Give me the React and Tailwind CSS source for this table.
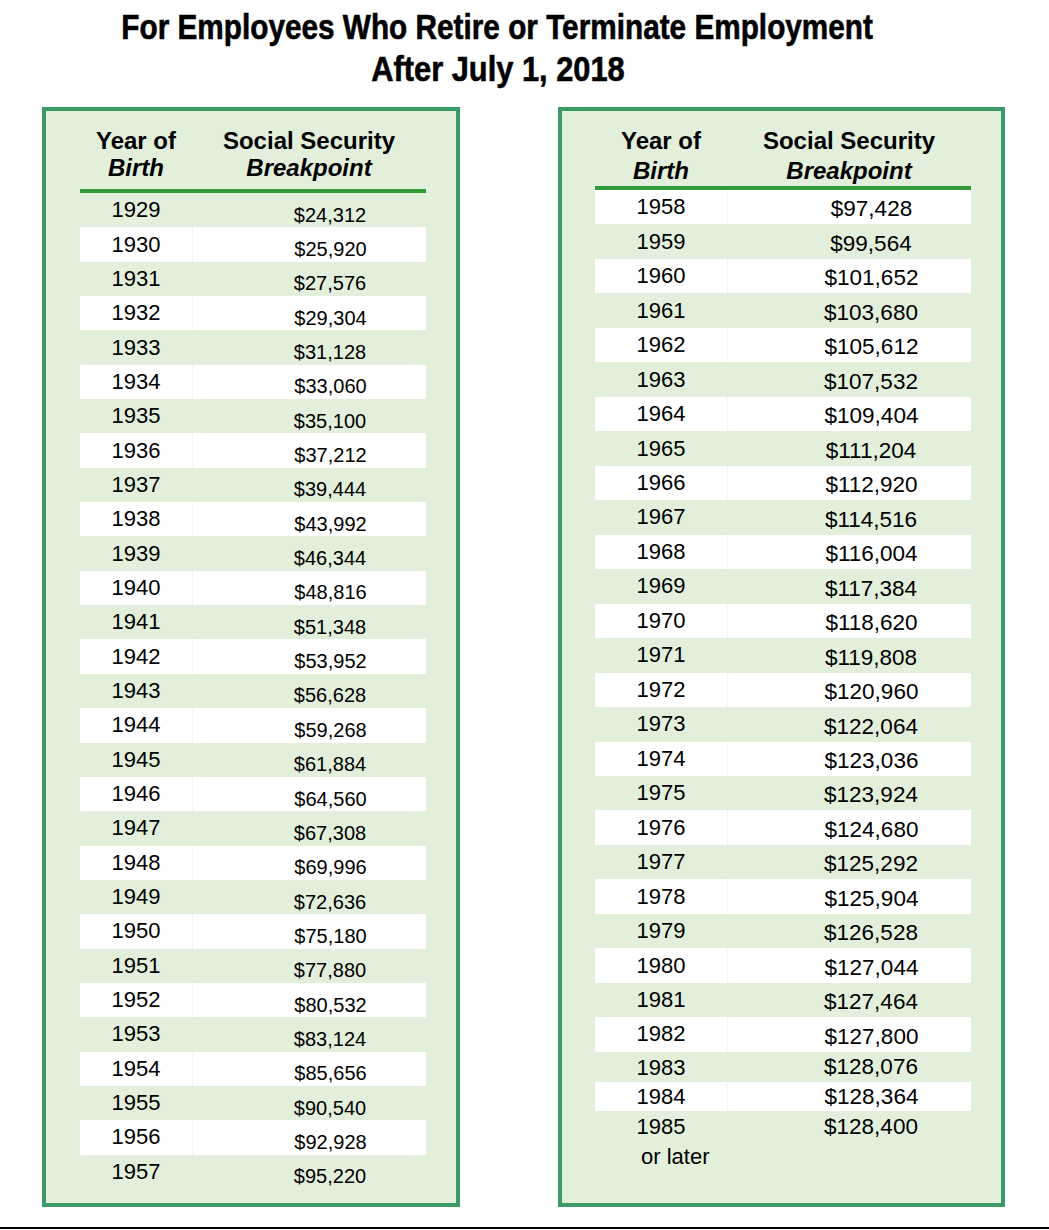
const LEFT = [
  ["1929", "$24,312"], ["1930", "$25,920"], ["1931", "$27,576"], ["1932", "$29,304"],
  ["1933", "$31,128"], ["1934", "$33,060"], ["1935", "$35,100"], ["1936", "$37,212"],
  ["1937", "$39,444"], ["1938", "$43,992"], ["1939", "$46,344"], ["1940", "$48,816"],
  ["1941", "$51,348"], ["1942", "$53,952"], ["1943", "$56,628"], ["1944", "$59,268"],
  ["1945", "$61,884"], ["1946", "$64,560"], ["1947", "$67,308"], ["1948", "$69,996"],
  ["1949", "$72,636"], ["1950", "$75,180"], ["1951", "$77,880"], ["1952", "$80,532"],
  ["1953", "$83,124"], ["1954", "$85,656"], ["1955", "$90,540"], ["1956", "$92,928"],
  ["1957", "$95,220"],
];

const RIGHT = [
  ["1958", "$97,428"], ["1959", "$99,564"], ["1960", "$101,652"], ["1961", "$103,680"],
  ["1962", "$105,612"], ["1963", "$107,532"], ["1964", "$109,404"], ["1965", "$111,204"],
  ["1966", "$112,920"], ["1967", "$114,516"], ["1968", "$116,004"], ["1969", "$117,384"],
  ["1970", "$118,620"], ["1971", "$119,808"], ["1972", "$120,960"], ["1973", "$122,064"],
  ["1974", "$123,036"], ["1975", "$123,924"], ["1976", "$124,680"], ["1977", "$125,292"],
  ["1978", "$125,904"], ["1979", "$126,528"], ["1980", "$127,044"], ["1981", "$127,464"],
  ["1982", "$127,800"],
];

function Header({ tall }) {
  return (
    <div className={`flex font-bold text-[24px] text-black ${tall ? "pt-[15px] leading-[30px]" : "pt-[16px] pb-[8px] leading-[27px]"}`}>
      <div className={`text-center ${tall ? "w-[132px]" : "w-[112px]"}`}>
        <div>Year of</div>
        <div className="italic">Birth</div>
      </div>
      <div className="flex-1 text-center">
        <div>Social Security</div>
        <div className="italic">Breakpoint</div>
      </div>
    </div>
  );
}

export default function App() {
  return (
    <div className="w-[1049px] h-[1230px] bg-white font-['Liberation_Sans',Arial,sans-serif] text-black overflow-hidden">
      {/* TITLE */}
      <div className="w-[995px] pt-[6px] h-[107px] text-center font-['Liberation_Sans',Arial,sans-serif] font-bold text-[35px] leading-[42px]">
        <div className="inline-block scale-x-[0.85] whitespace-nowrap [-webkit-text-stroke:0.6px_black]">
          For Employees Who Retire or Terminate Employment
        </div>
        <br />
        <div className="inline-block scale-x-[0.88] whitespace-nowrap [-webkit-text-stroke:0.6px_black]">After July 1, 2018</div>
      </div>

      <div className="flex pl-[42px] gap-[98px]">
        {/* LEFT TABLE */}
        <div className="w-[418px] h-[1100px] border-4 border-[#3b9b68] bg-[#e2efda] pl-[34px] pr-[30px]">
          <Header />
          <div className="h-[4px] bg-[#339a3a]" />
          {LEFT.map(([year, amt], i) => (
            <div
              key={year}
              className={`flex h-[34.35px] items-center ${i % 2 === 1 ? "bg-white" : ""}`}
            >
              <div className="w-[112px] text-center text-[22px] leading-none">{year}</div>
              <div className={`flex-1 h-full flex items-center justify-center pl-[42px] pt-[9px] text-[20px] leading-none ${i % 2 === 1 ? "border-l border-[#f3f5f1]" : ""}`}>
                {amt}
              </div>
            </div>
          ))}
        </div>

        {/* RIGHT TABLE */}
        <div className="w-[447px] h-[1100px] border-4 border-[#3b9b68] bg-[#e2efda] pl-[33px] pr-[30px]">
          <Header tall />
          <div className="h-[4px] bg-[#339a3a]" />
          {RIGHT.map(([year, amt], i) => (
            <div
              key={year}
              className={`flex h-[34.47px] items-center ${i % 2 === 0 ? "bg-white" : ""}`}
            >
              <div className="w-[132px] text-center text-[22px] leading-none">{year}</div>
              <div className={`flex-1 h-full flex items-center justify-center pl-[44px] pt-[5px] text-[22.5px] leading-none ${i % 2 === 0 ? "border-l border-[#f3f5f1]" : ""}`}>
                {amt}
              </div>
            </div>
          ))}
          <div className="flex h-[30px] items-center pt-[2px]">
            <div className="w-[132px] text-center text-[22px] leading-none">1983</div>
            <div className="flex-1 text-center pl-[44px] text-[22.5px] leading-none">$128,076</div>
          </div>
          <div className="flex h-[29px] items-center bg-white pt-[2px]">
            <div className="w-[132px] text-center text-[22px] leading-none">1984</div>
            <div className="flex-1 h-full flex items-center justify-center pl-[44px] text-[22.5px] leading-none border-l border-[#f3f5f1]">
              $128,364
            </div>
          </div>
          <div className="flex pt-[1px]">
            <div className="w-[132px] text-[22px] leading-[30px]">
              <div className="text-center">1985</div>
              <div className="pl-[46px]">or later</div>
            </div>
            <div className="flex-1 text-center pl-[44px] text-[22.5px] leading-[30px]">$128,400</div>
          </div>
        </div>
      </div>

      <div className="mt-[20px] h-[2px] bg-black" />
    </div>
  );
}
